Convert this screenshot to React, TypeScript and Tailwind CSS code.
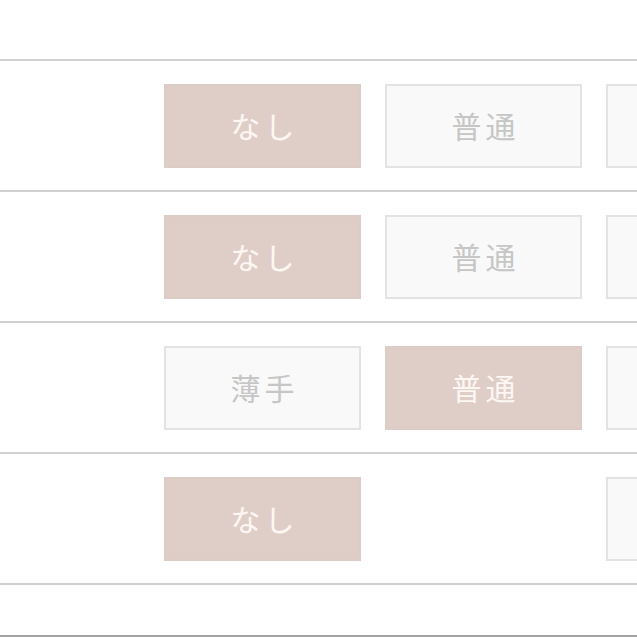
import React from 'react';

type Row = { options: (string | null)[]; selected: number };

const rows: Row[] = [
    { options: ['なし', '普通', '厚手'], selected: 0 },
    { options: ['なし', '普通', '厚手'], selected: 0 },
    { options: ['薄手', '普通', '厚手'], selected: 1 },
    { options: ['なし', null, 'あり'], selected: 0 },
];

const OptionButton = ({ label, active }: { label: string; active: boolean }) => (
    <button
        className={
            active
                ? 'h-[84px] w-[197px] shrink-0 bg-[#dfcec8] border-2 border-[#dcccc6] text-[#fdf7f3] text-[30px] tracking-[4px] pl-[4px]'
                : 'h-[84px] w-[197px] shrink-0 bg-[#f9f9f9] border-2 border-[#e3e3e3] text-[#c6c6c6] text-[30px] tracking-[4px] pl-[4px]'
        }
    >
        {label}
    </button>
);

const App = () => {
    return (
        <div
            className="w-[637px] h-[637px] overflow-hidden bg-white"
            style={{ fontFamily: '"Noto Sans CJK JP", "Noto Sans", sans-serif' }}
        >
            <div className="pt-[59px]">
                {rows.map((row, i) => (
                    <div
                        key={i}
                        className="border-t-2 border-[#d0d0d0] h-[131px] flex items-center pl-[164px] gap-[24px] last:border-b-2 last:h-[133px]"
                    >
                        {row.options.map((opt, j) =>
                            opt ? (
                                <OptionButton key={j} label={opt} active={row.selected === j} />
                            ) : (
                                <div key={j} className="h-[84px] w-[197px] shrink-0" />
                            )
                        )}
                    </div>
                ))}
            </div>
            <div className="mt-[50px] border-t-2 border-[#a3a3a3]" />
        </div>
    );
};

export default App;
